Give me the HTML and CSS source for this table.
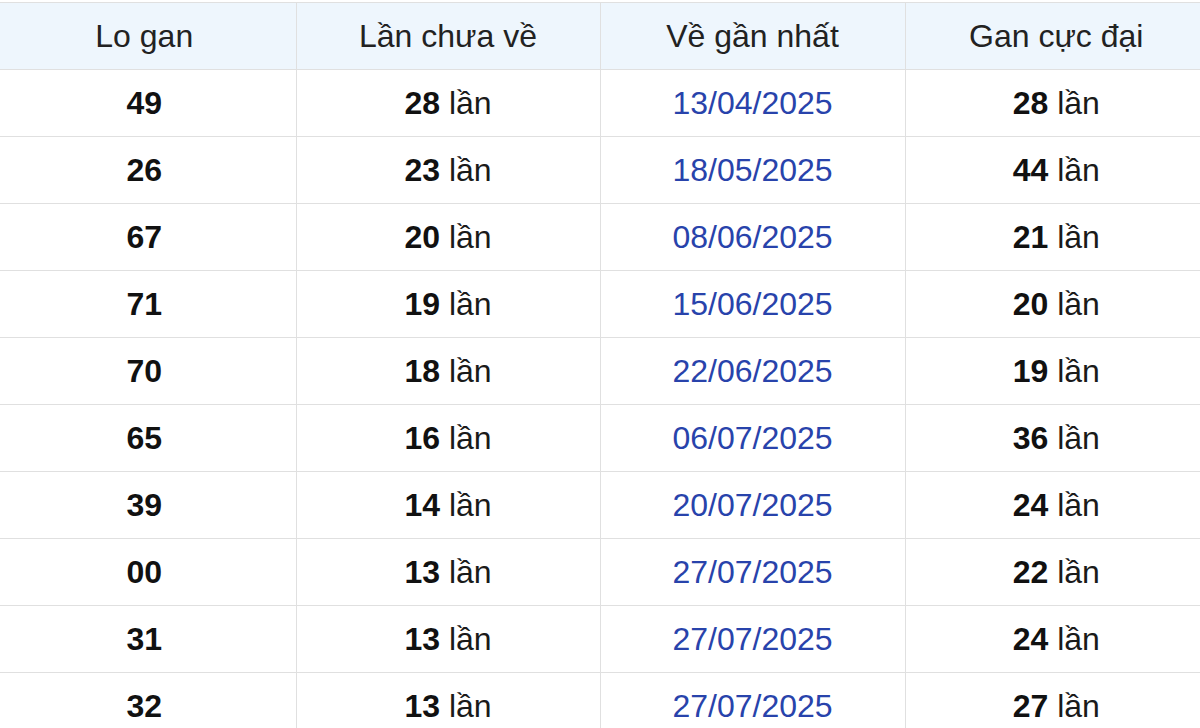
FILE: index.html
```html
<!DOCTYPE html>
<html lang="vi">
<head>
<meta charset="utf-8">
<link rel="stylesheet" href="styles.css">
</head>
<body>
<table class="gan">
  <colgroup>
    <col class="c1"><col class="c2"><col class="c3"><col class="c4">
  </colgroup>
  <thead>
    <tr><th>Lo gan</th><th>Lần chưa về</th><th>Về gần nhất</th><th>Gan cực đại</th></tr>
  </thead>
  <tbody>
    <tr><td><b>49</b></td><td><b>28</b> lần</td><td class="date">13/04/2025</td><td><b>28</b> lần</td></tr>
    <tr><td><b>26</b></td><td><b>23</b> lần</td><td class="date">18/05/2025</td><td><b>44</b> lần</td></tr>
    <tr><td><b>67</b></td><td><b>20</b> lần</td><td class="date">08/06/2025</td><td><b>21</b> lần</td></tr>
    <tr><td><b>71</b></td><td><b>19</b> lần</td><td class="date">15/06/2025</td><td><b>20</b> lần</td></tr>
    <tr><td><b>70</b></td><td><b>18</b> lần</td><td class="date">22/06/2025</td><td><b>19</b> lần</td></tr>
    <tr><td><b>65</b></td><td><b>16</b> lần</td><td class="date">06/07/2025</td><td><b>36</b> lần</td></tr>
    <tr><td><b>39</b></td><td><b>14</b> lần</td><td class="date">20/07/2025</td><td><b>24</b> lần</td></tr>
    <tr><td><b>00</b></td><td><b>13</b> lần</td><td class="date">27/07/2025</td><td><b>22</b> lần</td></tr>
    <tr><td><b>31</b></td><td><b>13</b> lần</td><td class="date">27/07/2025</td><td><b>24</b> lần</td></tr>
    <tr><td><b>32</b></td><td><b>13</b> lần</td><td class="date">27/07/2025</td><td><b>27</b> lần</td></tr>
  </tbody>
</table>
</body>
</html>
```
FILE: styles.css
```css
html, body {
  margin: 0;
  padding: 0;
  background: #ffffff;
}
body {
  padding-top: 2px;
  font-family: "Liberation Sans", Arial, sans-serif;
  color: #1a1a1a;
  overflow: hidden;
}
.gan {
  width: 1200px;
  border-collapse: collapse;
  table-layout: fixed;
  font-size: 32px;
}
.c1 { width: 296px; }
.c2 { width: 304px; }
.c3 { width: 305px; }
.c4 { width: 295px; }
.gan th, .gan td {
  border: 1px solid #e0e0e0;
  text-align: center;
  padding: 0;
  box-sizing: border-box;
}
.gan th {
  font-weight: normal;
  background: #eef6fd;
  color: #222;
  height: 67px;
}
.gan td { height: 67px; }
.gan tr > :first-child { border-left: none; padding-right: 7px; }
.gan tr > :last-child { border-right: none; padding-left: 7px; }
.gan b { font-weight: bold; color: #111; }
.gan .date { color: #2843ab; }
```
